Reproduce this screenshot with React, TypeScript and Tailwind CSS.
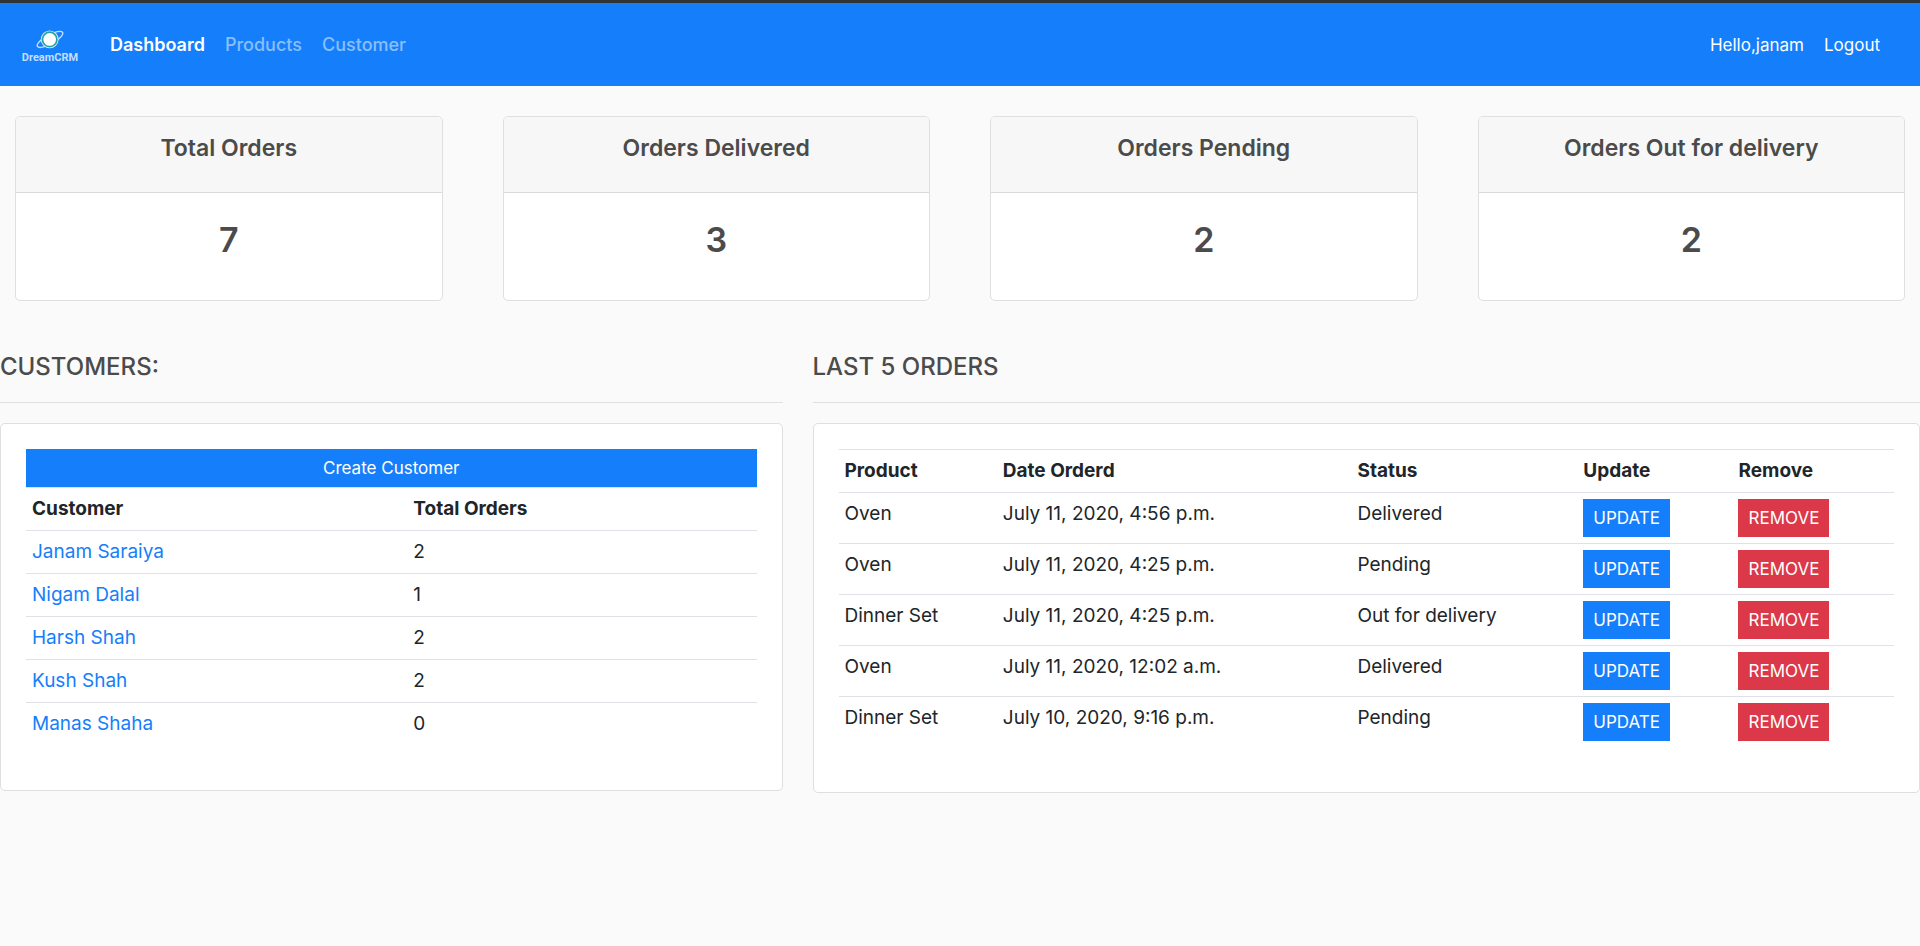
type Order = { product: string; date: string; status: string };

const stats = [
  { title: "Total Orders", value: 7 },
  { title: "Orders Delivered", value: 3 },
  { title: "Orders Pending", value: 2 },
  { title: "Orders Out for delivery", value: 2 },
];

const customers = [
  { name: "Janam Saraiya", orders: 2 },
  { name: "Nigam Dalal", orders: 1 },
  { name: "Harsh Shah", orders: 2 },
  { name: "Kush Shah", orders: 2 },
  { name: "Manas Shaha", orders: 0 },
];

const orders: Order[] = [
  { product: "Oven", date: "July 11, 2020, 4:56 p.m.", status: "Delivered" },
  { product: "Oven", date: "July 11, 2020, 4:25 p.m.", status: "Pending" },
  { product: "Dinner Set", date: "July 11, 2020, 4:25 p.m.", status: "Out for delivery" },
  { product: "Oven", date: "July 11, 2020, 12:02 a.m.", status: "Delivered" },
  { product: "Dinner Set", date: "July 10, 2020, 9:16 p.m.", status: "Pending" },
];

function Logo() {
  return (
    <a href="#" aria-label="DreamCRM home" className="block">
      <svg width="60" height="36" viewBox="0 0 60 36" aria-hidden="true">
        <g fill="none">
          <ellipse cx="30" cy="12.4" rx="14.4" ry="4.6" transform="rotate(-29 30 12.4)" stroke="#c3defe" strokeWidth="1.4" />
          <circle cx="29.7" cy="12.4" r="8.9" fill="#d5e9ff" />
          <circle cx="29.7" cy="12.4" r="7.2" fill="#ffffff" stroke="#23a5a8" strokeWidth="1.7" />
        </g>
        <text x="30" y="34" textAnchor="middle" fill="#c3defe" fontSize="11" fontWeight="700" fontFamily="Roboto, sans-serif">
          DreamCRM
        </text>
      </svg>
    </a>
  );
}

function Navbar() {
  return (
    <nav className="flex h-[86px] items-center border-t-3 border-[#333436] bg-[#157efb] pr-10 pl-5">
      <Logo />
      <div className="ml-[30px] flex flex-1 items-center gap-5 text-[18px] leading-[30px] font-medium">
        <a href="#" className="font-semibold text-white">Dashboard</a>
        <a href="#" className="text-[#8abefd]">Products</a>
        <a href="#" className="text-[#8abefd]">Customer</a>
      </div>
      <div className="flex items-center gap-5 text-[17px] leading-[30px] text-white">
        <span>Hello,janam</span>
        <a href="#">Logout</a>
      </div>
    </nav>
  );
}

function StatCard({ title, value }: { title: string; value: number }) {
  return (
    <div className="overflow-hidden rounded-[5px] border border-[#dfdfdf] bg-white text-center font-semibold text-[#4b4b4b]">
      <div className="border-b border-[#dadada] bg-[#f7f7f7] px-6 pt-4 pb-[29px]">
        <h5 className="text-[23px] leading-[30px]">{title}</h5>
      </div>
      <div className="px-6 pt-[26px] pb-[39px]">
        <h3 className="text-[34px] leading-[42px]">{value}</h3>
      </div>
    </div>
  );
}

const cell = "px-[6px] py-[6px] text-left align-top";
const row = "border-t border-[#dee2e6]";

function CustomersPanel() {
  return (
    <section className="col-span-5">
      <h5 className="text-[24px] leading-[30px] font-medium text-[#4b4b4b]">CUSTOMERS:</h5>
      <hr className="mt-5 mb-5 border-[#e0e0e0]" />
      <div className="rounded-[5px] border border-[#dfdfdf] bg-white px-[25px] pt-[25px] pb-[45px]">
        <a href="#" className="block bg-[#157efb] text-center text-[17px] leading-[38px] text-white">
          Create Customer
        </a>
        <table className="w-full table-fixed text-[19px] leading-[30px] text-[#212529]">
          <thead>
            <tr className={row}>
              <th className={`${cell} w-[52.2%] font-bold`}>Customer</th>
              <th className={`${cell} font-bold`}>Total Orders</th>
            </tr>
          </thead>
          <tbody>
            {customers.map((c) => (
              <tr key={c.name} className={row}>
                <td className={cell}>
                  <a href="#" className="text-[#157efb]">{c.name}</a>
                </td>
                <td className={cell}>{c.orders}</td>
              </tr>
            ))}
          </tbody>
        </table>
      </div>
    </section>
  );
}

const action = "block w-fit px-[10px] text-[17px] leading-[38px] text-white";

function OrdersPanel() {
  return (
    <section className="col-span-7">
      <h5 className="text-[24px] leading-[30px] font-medium text-[#4b4b4b]">LAST 5 ORDERS</h5>
      <hr className="mt-5 mb-5 border-[#e0e0e0]" />
      <div className="rounded-[5px] border border-[#dfdfdf] bg-white px-[25px] pt-[25px] pb-[45px]">
        <table className="w-full table-fixed text-[19px] leading-[30px] text-[#212529]">
          <thead>
            <tr className={row}>
              <th className={`${cell} w-[15%] font-bold`}>Product</th>
              <th className={`${cell} w-[33.6%] font-bold`}>Date Orderd</th>
              <th className={`${cell} w-[21.4%] font-bold`}>Status</th>
              <th className={`${cell} w-[14.7%] font-bold`}>Update</th>
              <th className={`${cell} font-bold`}>Remove</th>
            </tr>
          </thead>
          <tbody>
            {orders.map((o, i) => (
              <tr key={i} className={row}>
                <td className={cell}>{o.product}</td>
                <td className={cell}>{o.date}</td>
                <td className={cell}>{o.status}</td>
                <td className={cell}>
                  <a href="#" className={`${action} bg-[#157efb]`}>UPDATE</a>
                </td>
                <td className={cell}>
                  <a href="#" className={`${action} bg-[#db3849]`}>REMOVE</a>
                </td>
              </tr>
            ))}
          </tbody>
        </table>
      </div>
    </section>
  );
}

export default function App() {
  return (
    <div className="min-h-screen bg-[#fafafa] font-['Inter',sans-serif]">
      <Navbar />
      <main>
        <div className="grid grid-cols-4 gap-[60px] px-[15px] pt-[30px]">
          {stats.map((s) => (
            <StatCard key={s.title} title={s.title} value={s.value} />
          ))}
        </div>
        <div className="mt-[51px] grid grid-cols-12 items-start gap-[30px]">
          <CustomersPanel />
          <OrdersPanel />
        </div>
      </main>
    </div>
  );
}
